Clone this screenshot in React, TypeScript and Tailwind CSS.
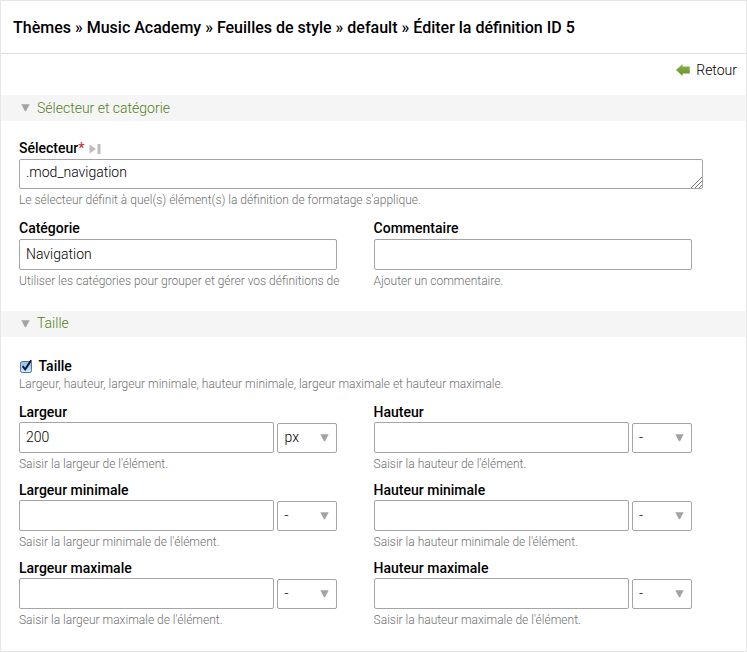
import React from "react";

function Triangle() {
  return (
    <svg width="9" height="8" viewBox="0 0 9 8" className="shrink-0">
      <path d="M0.3 0.3h8.4L5 7.2H4z" fill="#a3a3a3" />
    </svg>
  );
}

function SectionBar({ title, offset = "" }: { title: string; offset?: string }) {
  return (
    <div className="flex h-[26px] items-center bg-[#f5f5f5] pl-[19.5px]">
      <Triangle />
      <span className={`ml-[7.5px] text-[14px] text-[#557f1c] ${offset || "leading-[26px]"}`}>{title}</span>
    </div>
  );
}

function Help({ children }: { children: React.ReactNode }) {
  return <p className="mt-[2px] h-[18px] text-[12px] leading-[18px] whitespace-nowrap text-[#707070]">{children}</p>;
}

function UnitSelect({ value }: { value: string }) {
  return (
    <div className="mt-px flex h-[30px] w-[60px] items-start justify-between rounded-[2px] border border-[#a5a5a5] pr-[7px] pl-[6.5px]">
      <span className="leading-[27px]">{value}</span>
      <span className="mt-[10px]">
        <Triangle />
      </span>
    </div>
  );
}

function SizeField({ label, help, value = "", unit = "-" }: { label: string; help: string; value?: string; unit?: string }) {
  return (
    <div className="w-[318.5px]">
      <div className="h-[19px] leading-[18px] font-medium">{label}</div>
      <div className="flex gap-[3px]">
        <div className="h-[31px] w-[255px] rounded-[2px] border border-[#a5a5a5] px-[6px] leading-[29px]">{value}</div>
        <UnitSelect value={unit} />
      </div>
      <Help>{help}</Help>
    </div>
  );
}

function TextField({ label, help, value = "" }: { label: string; help: string; value?: string }) {
  return (
    <div className="w-[318px]">
      <div className="h-5 leading-[18px] font-medium">{label}</div>
      <div className="h-[31px] rounded-[2px] border border-[#a5a5a5] px-[6px] leading-[29px]">{value}</div>
      <Help>{help}</Help>
    </div>
  );
}

export default function App() {
  return (
    <div className="h-[652px] w-[747px] overflow-hidden border border-[#e6e6e6] bg-white font-['Roboto',sans-serif] text-[14px] font-light text-black">
      <h1 className="h-[53px] border-b border-[#dddddd] pl-3 text-[16px] leading-[54px] font-medium whitespace-nowrap">
        Thèmes » Music Academy » Feuilles de style » default » Éditer la définition ID 5
      </h1>
      <div className="flex h-[41px] items-start justify-end pt-[7px] pr-[9px]">
        <div className="flex h-[18px] items-center gap-[6px]">
          <svg width="14" height="12" viewBox="0 0 14 12">
            <defs>
              <linearGradient id="arrow" x1="0" y1="0" x2="0" y2="1">
                <stop offset="0" stopColor="#8fb552" />
                <stop offset="1" stopColor="#648f25" />
              </linearGradient>
            </defs>
            <path d="M0 6L6.6 0V2.4H13.8V9.4H6.6V12Z" fill="url(#arrow)" />
          </svg>
          <span className="leading-[18px]">Retour</span>
        </div>
      </div>

      <SectionBar title="Sélecteur et catégorie" />
      <div className="px-[18px] pt-[18px]">
        <div className="flex h-5 items-start leading-[18px] font-medium">
          Sélecteur<span className="text-[#bd3b36]">*</span>
          <svg width="12" height="10" viewBox="0 0 12 10" className="mt-[5px] ml-[5px]" fill="#bdbdbd">
            <path d="M0.5 0.5L7 5L0.5 9.5ZM8.5 0H11.5V10H8.5Z" />
          </svg>
        </div>
        <div className="flex h-[30px] w-[684px] items-end justify-between rounded-[2px] border border-[#a5a5a5] pl-[6px]">
          <span className="h-[28px] leading-[24px]">.mod_navigation</span>
          <svg width="11" height="11" viewBox="0 0 11 11" stroke="#777" strokeWidth="1">
            <path d="M0 11L11 0M4 11L11 4M8 11L11 8" />
          </svg>
        </div>
        <Help>Le sélecteur définit à quel(s) élément(s) la définition de formatage s'applique.</Help>
        <div className="mt-[10px] flex gap-[36.6px]">
          <TextField label="Catégorie" value="Navigation" help="Utiliser les catégories pour grouper et gérer vos définitions de" />
          <TextField label="Commentaire" help="Ajouter un commentaire." />
        </div>
      </div>

      <div className="h-[21px]" />
      <SectionBar title="Taille" offset="h-[26px] leading-[24px]" />
      <div className="px-[18px] pt-5">
        <div className="flex h-[18px] items-center font-medium">
          <svg width="14" height="15" viewBox="0 0 14 15" className="ml-px">
            <defs>
              <linearGradient id="check" x1="0" y1="0" x2="0" y2="1">
                <stop offset="0" stopColor="#8fbdea" />
                <stop offset="0.5" stopColor="#a9d3f7" />
                <stop offset="1" stopColor="#cdf0ff" />
              </linearGradient>
            </defs>
            <rect x="0.5" y="2.5" width="11" height="11" rx="1.8" fill="url(#check)" stroke="#5c6f9c" />
            <path d="M2.6 7.2L5.2 10.3L11.2 1.2" fill="none" stroke="#111827" strokeWidth="2" />
          </svg>
          <span className="ml-[4.5px] leading-[18px]">Taille</span>
        </div>
        <p className="h-[18px] text-[12px] leading-[18px] text-[#707070]">
          Largeur, hauteur, largeur minimale, hauteur minimale, largeur maximale et hauteur maximale.
        </p>
        <div className="mt-[10px] grid grid-cols-[318px_318px] gap-x-[36.6px] gap-y-2">
          <SizeField label="Largeur" value="200" unit="px" help="Saisir la largeur de l'élément." />
          <SizeField label="Hauteur" help="Saisir la hauteur de l'élément." />
          <SizeField label="Largeur minimale" help="Saisir la largeur minimale de l'élément." />
          <SizeField label="Hauteur minimale" help="Saisir la hauteur minimale de l'élément." />
          <SizeField label="Largeur maximale" help="Saisir la largeur maximale de l'élément." />
          <SizeField label="Hauteur maximale" help="Saisir la hauteur maximale de l'élément." />
        </div>
      </div>
    </div>
  );
}
